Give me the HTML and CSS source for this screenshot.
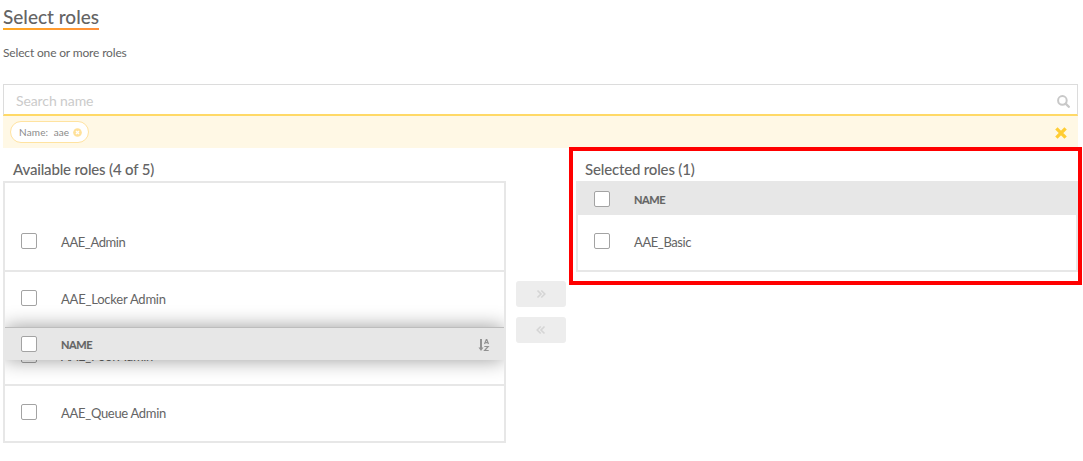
FILE: index.html
```html
<!DOCTYPE html>
<html lang="en">
<head>
<meta charset="utf-8">
<title>Select roles</title>
<link rel="stylesheet" href="styles.css">
</head>
<body>
<main class="page">
  <h1 class="title">Select roles</h1>
  <p class="subtitle">Select one or more roles</p>
  <div class="search">
    <span class="placeholder">Search name</span>
    <svg class="search-icon" viewBox="0 0 13 13"><circle cx="5.4" cy="5.4" r="4.3" fill="none" stroke="#c8c8c8" stroke-width="2"/><path d="M8.600 8.600l3.200 3.200" stroke="#c8c8c8" stroke-width="2.3" stroke-linecap="round"/></svg>
  </div>
  <div class="filters">
    <span class="chip"><span class="chip-text">Name:&nbsp; aae</span><svg class="chip-x" viewBox="0 0 10 10"><circle cx="5" cy="5" r="4.8" fill="#ffe19a"/><path d="M3.3 3.3l3.4 3.4M6.7 3.3L3.3 6.7" stroke="#fff" stroke-width="1.5"/></svg></span>
    <svg class="clear" viewBox="0 0 12 12"><path d="M2.600 2.600l6.800 6.800M9.400 2.600L2.600 9.400" stroke="#ffcd34" stroke-width="3.4" stroke-linecap="square"/></svg>
  </div>
  <div class="columns">
    <section class="available">
      <h2 class="heading heading-left">Available roles (4 of 5)</h2>
      <div class="table">
        <div class="spacer"></div>
        <div class="row"><i class="box"></i><span class="name n-admin">AAE_Admin</span></div>
        <div class="row"><i class="box"></i><span class="name n-locker">AAE_Locker Admin</span></div>
        <div class="row"><i class="box"></i><span class="name n-pool">AAE_Pool Admin</span></div>
        <div class="row"><i class="box"></i><span class="name n-queue">AAE_Queue Admin</span></div>
        <div class="head floating"><i class="box"></i><span class="label">NAME</span>
          <svg class="sort" viewBox="0 0 12 14"><path d="M3 1v10" stroke="#929292" stroke-width="2"/><path d="M.5 9.500h5L3 13z" fill="#929292"/><path d="M6.500 6L8.300 1.500h.5L10.500 6M7.200 4.600h2.800M6.300 8.500h3.900L6.600 12.500H10.700" fill="none" stroke="#929292" stroke-width="1.2"/></svg>
        </div>
      </div>
    </section>
    <div class="buttons">
      <span class="move"><svg viewBox="0 0 10 10"><path d="M1.500 1.500L5 5 1.500 8.500M5.300 1.500L8.800 5 5.300 8.500"/></svg></span>
      <span class="move"><svg viewBox="0 0 10 10"><path d="M4.700 1.500L1.200 5l3.500 3.500M8.500 1.500L5 5l3.500 3.500"/></svg></span>
    </div>
    <section class="selected">
      <h2 class="heading heading-right">Selected roles (1)</h2>
      <div class="table">
        <div class="head"><i class="box"></i><span class="label">NAME</span></div>
        <div class="row"><i class="box"></i><span class="name n-basic">AAE_Basic</span></div>
      </div>
    </section>
  </div>
</main>
</body>
</html>
```

FILE: styles.css
```css
* { box-sizing: border-box; }
body { margin: 0; background: #fff; color: #646464; font-family: Lato, "Open Sans", sans-serif; overflow: hidden; }
.page { width: 1083px; height: 461px; padding: 4px 5px 0 3px; }
.title { width: 96px; height: 26px; margin: 0; padding-bottom: 2px; font-size: 19px; line-height: 25px; font-weight: 500; white-space: nowrap; border-bottom: 2px solid; border-image: linear-gradient(90deg, #ffa81f, #ff8f3c) 1; }
.subtitle { margin: 15px 0 0; font-size: 12px; line-height: 16px; letter-spacing: -.16px; white-space: nowrap; }
.search { height: 32px; margin-top: 23px; padding: 0 7px 0 12px; display: flex; align-items: center; justify-content: space-between; border: 1px solid #dcdcdc; border-bottom: 2px solid #ffd966; }
.placeholder { font-size: 14px; color: #cbcbcb; padding-top: 1px; letter-spacing: -.1px; }
.search-icon { width: 13px; height: 13px; margin-top: 4px; }
.filters { height: 32px; padding: 0 11px 0 7px; display: flex; align-items: center; justify-content: space-between; background: #fff8e5; }
.chip { width: 79px; height: 22px; padding: 0 6px 0 8px; display: flex; align-items: center; justify-content: space-between; background: #fff; border: 1px solid #ffe3a0; border-radius: 11px; color: #8a8a8a; font-size: 10px; letter-spacing: .15px; white-space: nowrap; }
.chip-text { margin-top: -1px; }
.chip-x { width: 9px; height: 9px; }
.clear { width: 12px; height: 12px; margin-top: 1px; }
.columns { display: flex; align-items: flex-start; }
.available { width: 503px; }
.heading { height: 33px; margin: 0; padding-top: 11px; font-size: 15px; line-height: 20px; font-weight: 500; letter-spacing: -.17px; white-space: nowrap; }
.heading-left { padding-left: 10px; }
.table { position: relative; overflow: hidden; border: 2px solid #e7e7e7; border-bottom: 0; }
.spacer { height: 32px; }
.row { height: 57px; padding: 0 16px 3px; display: flex; align-items: center; border-bottom: 2px solid #e7e7e7; }
.box { flex: none; width: 16px; height: 16px; margin-right: 24px; background: #fff; border: 1px solid #a3a3a3; border-radius: 2px; }
.name { font-size: 13px; line-height: 16px; padding-top: 2px; letter-spacing: -.3px; white-space: nowrap; }
.n-admin, .n-basic { letter-spacing: -.42px; }
.n-locker { letter-spacing: -.22px; }
.head { height: 32px; padding: 0 14px 0 16px; display: flex; align-items: center; background: #e7e7e7; }
.label { font-size: 11px; font-weight: 700; padding-top: 1px; letter-spacing: -.45px; -webkit-text-stroke: .15px; }
.floating { position: absolute; left: 0; right: 0; top: 144px; height: 33px; border-top: 1px solid #bdbdbd; box-shadow: 0 0 20px rgba(0,0,0,.4); }
.sort { width: 12px; height: 14px; margin-left: auto; margin-top: 2px; }
.buttons { width: 50px; margin: 133px 0 0 10px; display: flex; flex-direction: column; gap: 10px; }
.move { height: 26px; display: flex; align-items: center; justify-content: center; background: #ededed; border-radius: 3px; }
.move svg { width: 10px; height: 10px; fill: none; stroke: #d5d5d5; stroke-width: 1.6; }
.selected { position: relative; width: 513px; height: 138px; margin: -1px -4px 0 3px; padding: 0 0 0 3px; border: 4px solid #f00; flex: none; }
.selected .heading { height: 30px; padding-top: 8px; padding-left: 9px; }
```
